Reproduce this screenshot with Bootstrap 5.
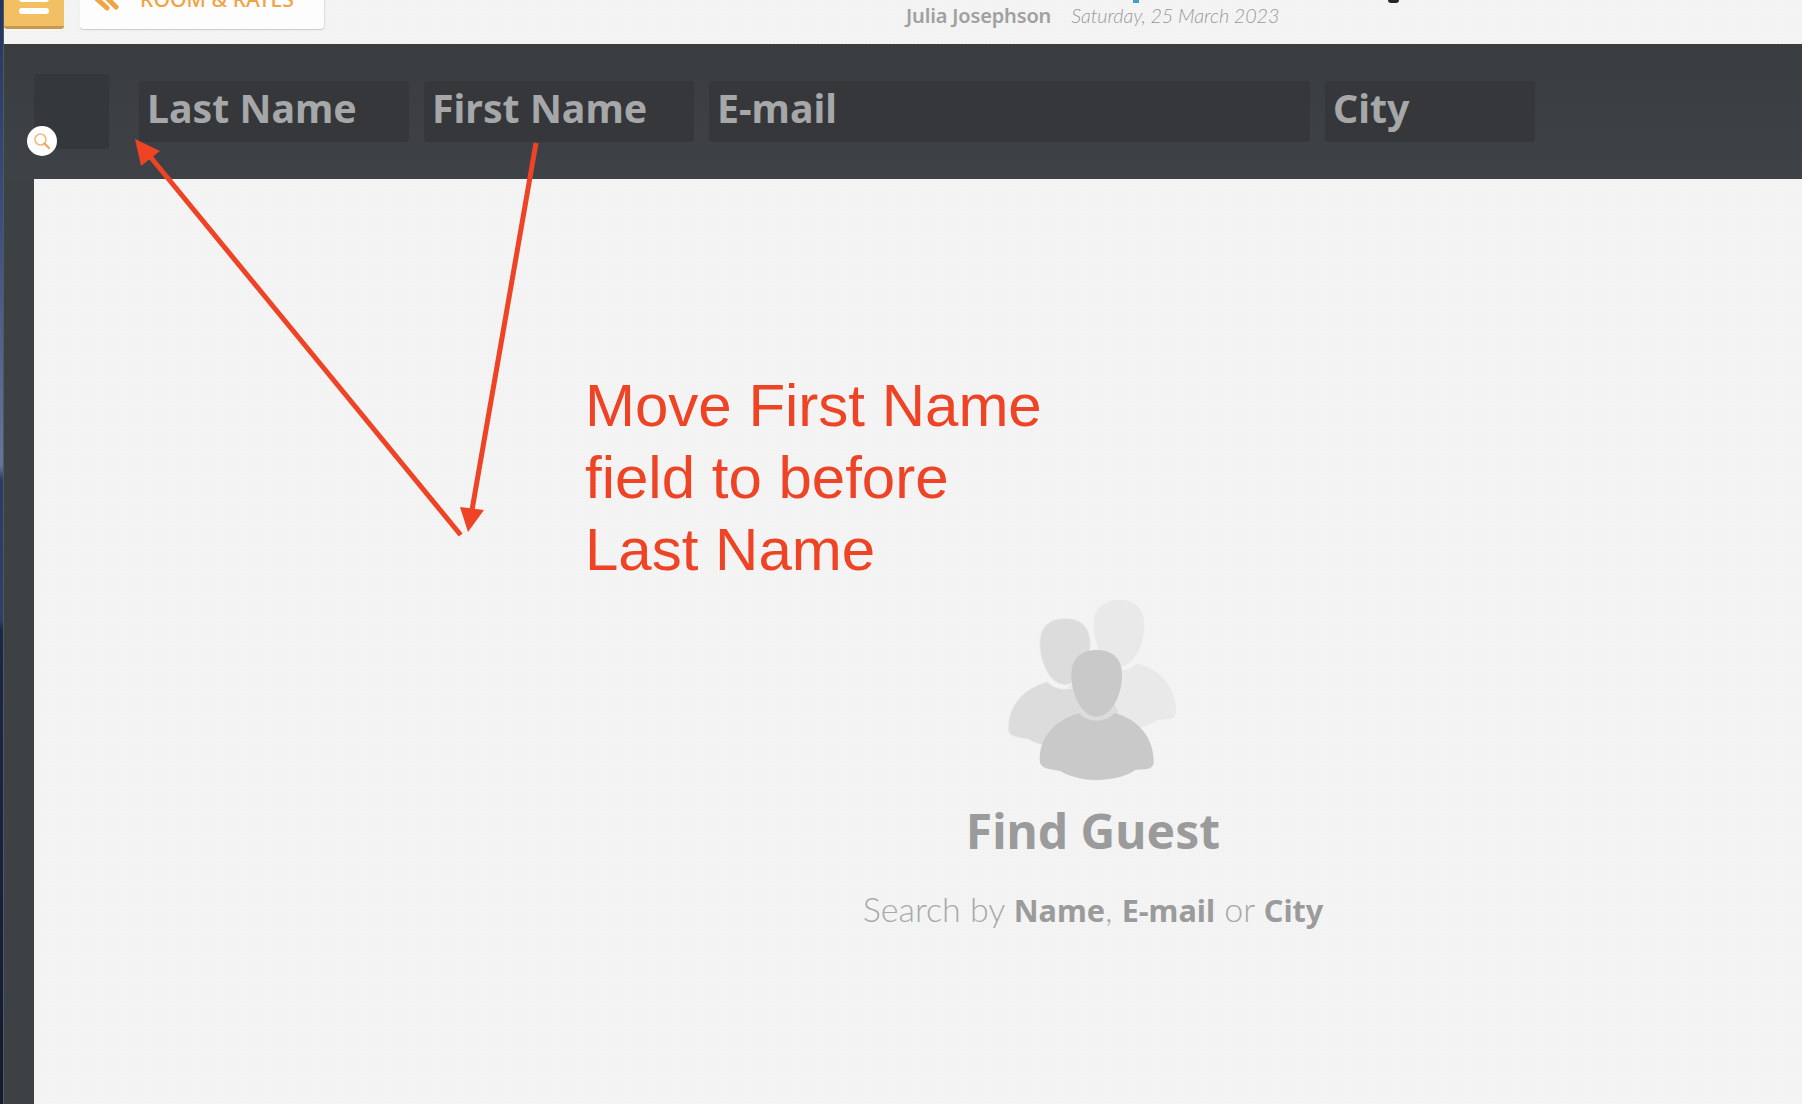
<!DOCTYPE html>
<html lang="en">
<head>
<meta charset="utf-8">
<title>Find Guest</title>
<link href="https://cdn.jsdelivr.net/npm/bootstrap@5.3.0/dist/css/bootstrap.min.css" rel="stylesheet">
<style>
html,body{height:100%;margin:0;overflow:hidden}
body{font-family:"Lato","Liberation Sans",sans-serif;background:#3e4144;position:relative;width:1802px;height:1104px}
.wall-strip{width:4px;flex:none;background:linear-gradient(180deg,#22355f 0,#3a4f7e 220px,#66759a 465px,#2a3c66 480px,#2d4068 620px,#1b2846 630px,#121c33 1104px)}
.app-shell{flex:1 1 auto;min-width:0;background:#3e4144;border-left:1px solid #55585b;margin-left:-1px}
.paper{background-color:#f4f4f4;background-image:radial-gradient(#eeeeee .7px,transparent .8px);background-size:3px 3px}
.top-strip{height:44px;overflow:hidden;position:relative}
.menu-tab{width:60px;height:29px;background:#f2c063;border-bottom:3px solid #c49a50;border-radius:0 0 3px 3px;padding-bottom:12px;gap:6px}
.menu-tab i{display:block;flex:none;width:30px;height:6px;border-radius:3px;background:#fff}
.room-tab{width:244px;height:29px;margin-left:16px;background:#fdfdfd;border-radius:0 0 3px 3px;box-shadow:0 1px 1px #c9c9c9,1px 0 1px #ddd}
.room-tab svg{overflow:visible;position:absolute;left:29px;top:0}
.room-wrap{position:relative}
.room-label{color:#f0a445;font-family:"Noto Sans",sans-serif;font-size:21.200px;line-height:20px;font-weight:500;margin-left:60px;white-space:nowrap;margin-top:-11px}
.guest-meta{position:absolute;left:902px;top:3px;line-height:24px;white-space:nowrap;color:#a0a0a0}
.guest-name{font-family:"Noto Sans",sans-serif;font-size:20px;font-weight:600;letter-spacing:-.15px}
.guest-date{font-size:19.800px;font-style:italic;font-weight:300;margin-left:20px;letter-spacing:-.1px;color:#9a9a9a}
.cut-p{position:absolute;left:1129px;top:0;width:6px;height:3px;background:#3f9ed6}
.cut-y{position:absolute;left:1384px;top:0;width:11px;height:3px;background:#25272b;border-radius:0 0 6px 6px}
.search-band{height:135px;padding-left:30px;background:linear-gradient(180deg,#3a3d40,#3e4145)}
.photo-slot{width:75px;height:75px;margin-right:30px;background:#35383b;position:relative}
.lens-badge{position:absolute;left:-7px;top:52px;width:30px;height:30px;background:#fff}
.field-box{height:61px;background:#35373a;color:#a6a7a9;font-family:"Noto Sans",sans-serif;font-size:39.300px;font-weight:700;line-height:55px;padding-left:8px;margin-right:15px;white-space:nowrap}
.w-name{width:270px}.w-mail{width:601px}.w-city{width:210px}
.main-area{flex:1 1 auto;margin-left:30px;padding-left:350px;padding-top:421px;height:925px}
.people-art{display:block;width:168px;height:180px;margin-left:-3px}
.empty-title{font-family:"Noto Sans",sans-serif;font-size:48px;font-weight:700;color:#9b9b9b;line-height:60px;margin:0;margin-top:21px}
.empty-sub{font-size:34px;font-weight:300;color:#a8a8a8;line-height:44px;margin:0;margin-top:26px}
.empty-sub b{font-family:"Noto Sans",sans-serif;font-size:30.600px;font-weight:700;color:#9b9b9b}
.note-text{position:absolute;left:585px;top:370px;color:#ee4324;font:60px/72px "Liberation Sans",Arial,sans-serif;white-space:nowrap}
.note-arrows{position:absolute;left:0;top:0;pointer-events:none}
</style>
</head>
<body class="d-flex">
<div class="wall-strip"></div>
<div class="app-shell d-flex flex-column">
  <header class="top-strip paper d-flex align-items-start">
    <div class="menu-tab d-flex flex-column align-items-center justify-content-end flex-shrink-0"><i></i><i></i></div>
    <div class="room-wrap flex-shrink-0">
      <div class="room-tab d-flex align-items-start">
        <svg width="40" height="29" viewBox="0 0 40 29" aria-hidden="true"><path d="M3 -2 L14 8 M12 -4 L23 7" fill="none" stroke="#f0a445" stroke-width="5" stroke-linecap="round"/></svg>
        <span class="room-label">ROOM &amp; RATES</span>
      </div>
    </div>
    <div class="guest-meta"><span class="guest-name">Julia Josephson</span><span class="guest-date">Saturday, 25 March 2023</span></div>
    <span class="cut-p"></span><span class="cut-y"></span>
  </header>
  <section class="search-band d-flex align-items-center">
    <div class="photo-slot rounded-1 flex-shrink-0">
      <div class="lens-badge rounded-circle d-flex align-items-center justify-content-center">
        <svg width="18" height="18" viewBox="0 0 18 18" aria-hidden="true"><circle cx="7.500" cy="7.500" r="5.500" fill="none" stroke="#f6b878" stroke-width="1.600"/><path d="M11.500 11.500 L16 16" stroke="#f2a860" stroke-width="2.400" stroke-linecap="round"/></svg>
      </div>
    </div>
    <div class="field-box w-name rounded-1">Last Name</div>
    <div class="field-box w-name rounded-1">First Name</div>
    <div class="field-box w-mail rounded-1">E-mail</div>
    <div class="field-box w-city rounded-1">City</div>
  </section>
  <main class="main-area paper d-flex flex-column align-items-center text-center">
    <svg class="people-art" viewBox="23 30 504 540" aria-hidden="true">
      <defs>
        <g id="guest-shape">
          <path d="M236 370C250 385 270 392 289 392C310 392 330 385 342 370C410 385 460 440 460 515C460 530 450 538 430 538L405 540C380 560 330 570 289 570C250 570 205 560 180 543L150 538C130 535 118 525 118 510C118 440 165 390 236 370Z"/>
          <path d="M289 180C340 180 365 210 365 255C365 320 330 380 289 380C248 380 213 320 213 255C213 210 238 180 289 180Z"/>
        </g>
      </defs>
      <use href="#guest-shape" x="67" y="-150" fill="#e9e9e9"/>
      <use href="#guest-shape" x="-95" y="-95" fill="#dcdcdc" stroke="#efefef" stroke-width="3"/>
      <use href="#guest-shape" fill="#c9c9c9"/>
    </svg>
    <h2 class="empty-title">Find Guest</h2>
    <p class="empty-sub">Search by <b>Name</b>, <b>E-mail</b> or <b>City</b></p>
  </main>
</div>
<div class="note-text">Move First Name<br>field to before<br>Last Name</div>
<svg class="note-arrows" width="1802" height="1104" aria-hidden="true">
  <path d="M460.700 535 L148 154" stroke="#ee4324" stroke-width="5" fill="none"/>
  <path d="M135 139 L160 151 L141 166Z" fill="#ee4324"/>
  <path d="M536 143 L472 510" stroke="#ee4324" stroke-width="5" fill="none"/>
  <path d="M468 532 L460 507 L484 510Z" fill="#ee4324"/>
</svg>
<script src="https://cdn.jsdelivr.net/npm/bootstrap@5.3.0/dist/js/bootstrap.bundle.min.js"></script>
</body>
</html>
